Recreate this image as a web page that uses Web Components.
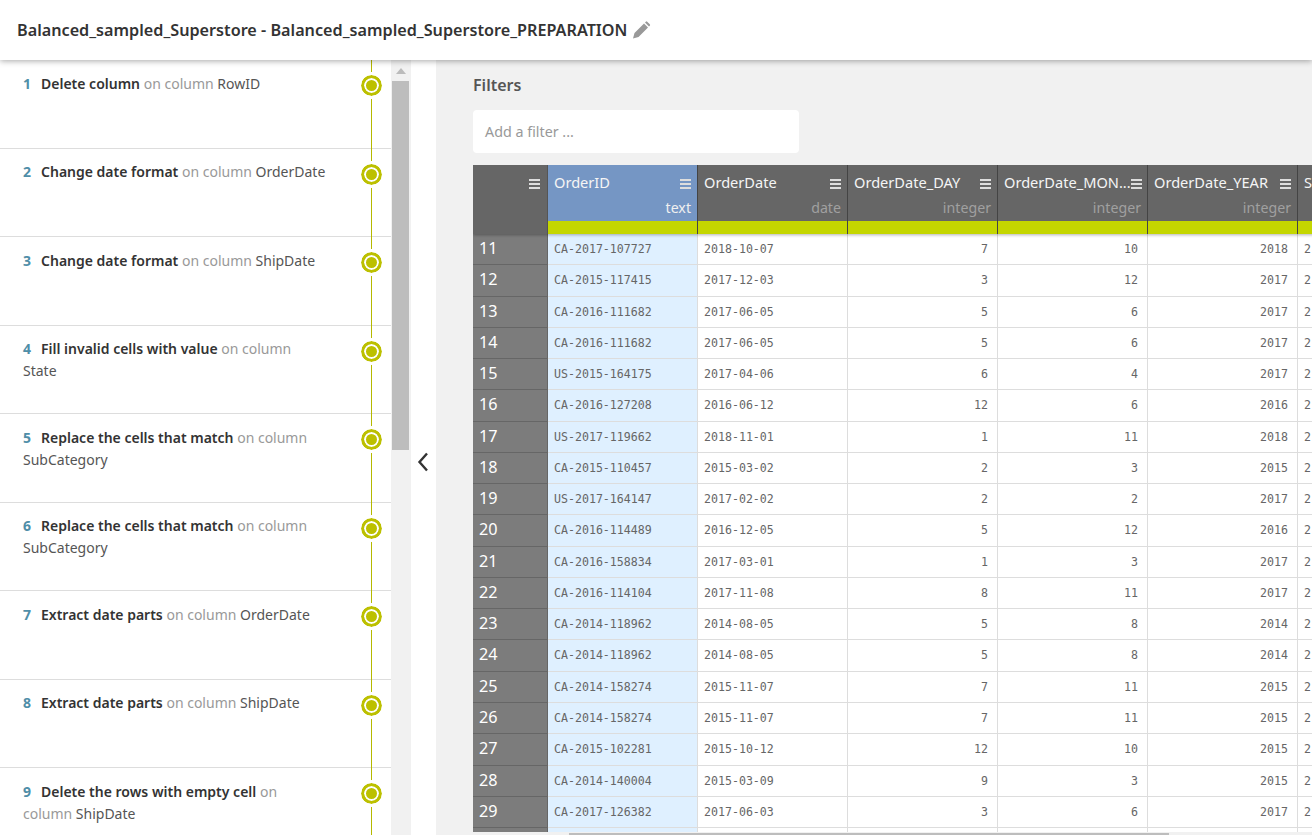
<!DOCTYPE html>
<html>
<head>
<meta charset="utf-8">
<style>
  html, body { margin: 0; height: 835px; overflow: hidden; background: #f1f1f1; }
  body { font-family: "Noto Sans", "Open Sans", sans-serif; color: #333; }
</style>
</head>
<body>
<prep-app></prep-app>
<script>
const SANS = '"Noto Sans", "Open Sans", sans-serif';

class AppHeader extends HTMLElement {
  constructor() {
    super();
    this.attachShadow({ mode: "open" });
    this.shadowRoot.innerHTML = `
    <style>
    :host {
      display: flex;
      align-items: center;
      height: 60px;
      padding-left: 17px;
      background: #fff;
      box-shadow: 0 1px 6px rgba(0, 0, 0, 0.35);
      position: relative;
      z-index: 2;
      font: 600 16.2px ${SANS};
      color: #333;
    }
    svg { margin-left: 6px; }
    </style>
    <slot></slot>
    <svg width="18" height="18" viewBox="0 0 18 18">
      <path fill="#999" d="M0 17.5l1.5-5.5L11 2.500l4 4L5.500 16zM12 1.500l.8-.8a1 1 0 0 1 1.400 0l2.600 2.600a1 1 0 0 1 0 1.400l-.8.8z"/>
    </svg>
    `;
  }
}
customElements.define("app-header", AppHeader);

class StepItem extends HTMLElement {
  constructor() {
    super();
    this.attachShadow({ mode: "open" });
    this.shadowRoot.innerHTML = `
    <style>
    :host {
      display: block;
      box-sizing: border-box;
      height: 88.5px;
      border-bottom: 1px solid #ddd;
      position: relative;
      padding: 12.7px 40px 0 23px;
      font: 400 14px/22px ${SANS};
      color: #999;
    }
    .num { color: #4f8ea8; font-weight: 700; margin-right: 10px; }
    ::slotted(b) { color: #333; font-weight: 600; }
    ::slotted(span) { color: #555; }
    .line { position: absolute; left: 371px; top: 0; bottom: -1px; width: 1px; background: #b5b900; z-index: 1; }
    .dot {
      position: absolute;
      left: 361px;
      top: 15px;
      width: 21px;
      height: 21px;
      box-sizing: border-box;
      border: 3px solid #bcc000;
      border-radius: 50%;
      background: #bcc000;
      box-shadow: inset 0 0 0 2px #fff;
      outline: 3px solid #fff;
      outline-offset: 0;
      z-index: 2;
    }
    </style>
    <div class="line"></div>
    <div class="dot"></div>
    <span class="num"></span><slot></slot>
    `;
  }
  connectedCallback() {
    this.shadowRoot.querySelector(".num").textContent = this.getAttribute("num");
  }
}
customElements.define("step-item", StepItem);

class StepPanel extends HTMLElement {
  constructor() {
    super();
    this.attachShadow({ mode: "open" });
    this.shadowRoot.innerHTML = `
    <style>
    :host { display: flex; width: 436px; background: #fff; flex: none; height: 775px; overflow: hidden; }
    .list { width: 391px; flex: none; height: 775px; overflow: hidden; }
    .track { width: 20px; flex: none; background: #f1f1f1; position: relative; display: flex; flex-direction: column; align-items: center; }
    .arrow { width: 0; height: 0; margin-top: 8px; border: 5px solid transparent; border-top: 0; border-bottom: 6px solid #bbb; }
    .thumb { width: 17px; height: 369px; margin-top: 7px; background: #bdbdbd; margin-left: -2px; }
    .toggle { width: 25px; flex: none; display: flex; flex-direction: column; align-items: center; padding: 392px 2px 0 0; box-sizing: border-box; }
    </style>
    <div class="list"><slot></slot></div>
    <div class="track"><div class="arrow"></div><div class="thumb"></div></div>
    <div class="toggle">
      <svg width="12" height="20" viewBox="0 0 12 20"><path d="M10 1.500L2.500 10l7.500 8.500" fill="none" stroke="#333" stroke-width="2.400"/></svg>
    </div>
    `;
  }
}
customElements.define("step-panel", StepPanel);

class FilterBox extends HTMLElement {
  constructor() {
    super();
    this.attachShadow({ mode: "open" });
    this.shadowRoot.innerHTML = `
    <style>
    :host { display: block; font-family: ${SANS}; }
    h3 { margin: 0; font: 600 16px/22px ${SANS}; color: #555; padding-top: 14px; height: 22px; }
    .input {
      width: 326px;
      height: 43px;
      margin-top: 14px;
      box-sizing: border-box;
      background: #fff;
      border-radius: 4px;
      padding-left: 12px;
      display: flex;
      align-items: center;
      font-size: 14.3px;
      color: #999;
    }
    </style>
    <h3>Filters</h3>
    <div class="input">Add a filter ...</div>
    `;
  }
}
customElements.define("filter-box", FilterBox);

const COLUMNS = [
  { name: "OrderID", type: "text", sel: true },
  { name: "OrderDate", type: "date" },
  { name: "OrderDate_DAY", type: "integer" },
  { name: "OrderDate_MON...", type: "integer" },
  { name: "OrderDate_YEAR", type: "integer" },
  { name: "ShipDate", type: "date" }
];

const ROWS = [
  [11, "CA-2017-107727", "2018-10-07", 7, 10, 2018, 2],
  [12, "CA-2015-117415", "2017-12-03", 3, 12, 2017, 2],
  [13, "CA-2016-111682", "2017-06-05", 5, 6, 2017, 2],
  [14, "CA-2016-111682", "2017-06-05", 5, 6, 2017, 2],
  [15, "US-2015-164175", "2017-04-06", 6, 4, 2017, 2],
  [16, "CA-2016-127208", "2016-06-12", 12, 6, 2016, 2],
  [17, "US-2017-119662", "2018-11-01", 1, 11, 2018, 2],
  [18, "CA-2015-110457", "2015-03-02", 2, 3, 2015, 2],
  [19, "US-2017-164147", "2017-02-02", 2, 2, 2017, 2],
  [20, "CA-2016-114489", "2016-12-05", 5, 12, 2016, 2],
  [21, "CA-2016-158834", "2017-03-01", 1, 3, 2017, 2],
  [22, "CA-2016-114104", "2017-11-08", 8, 11, 2017, 2],
  [23, "CA-2014-118962", "2014-08-05", 5, 8, 2014, 2],
  [24, "CA-2014-118962", "2014-08-05", 5, 8, 2014, 2],
  [25, "CA-2014-158274", "2015-11-07", 7, 11, 2015, 2],
  [26, "CA-2014-158274", "2015-11-07", 7, 11, 2015, 2],
  [27, "CA-2015-102281", "2015-10-12", 12, 10, 2015, 2],
  [28, "CA-2014-140004", "2015-03-09", 9, 3, 2015, 2],
  [29, "CA-2017-126382", "2017-06-03", 3, 6, 2017, 2],
  // only the top of this row is in view, its text is below the fold
  ["", "", "", "", "", "", ""]
];

const BURGER = `<svg class="burger" width="11" height="10" viewBox="0 0 11 10"><path d="M0 0h11v2H0zM0 4h11v2H0zM0 8h11v2H0z" fill="currentColor"/></svg>`;

class DataTable extends HTMLElement {
  constructor() {
    super();
    this.attachShadow({ mode: "open" });
    const head = COLUMNS.map(c => `
      <div class="col-head ${c.sel ? "sel" : ""}">
        <div class="name"><span>${c.name}</span>${BURGER}</div>
        <div class="type">${c.type}</div>
        <div class="quality"></div>
      </div>`).join("");
    const rows = ROWS.map(r => `
      <div class="row">
        <div class="idx">${r[0]}</div>
        <div class="cell sel">${r[1]}</div>
        <div class="cell">${r[2]}</div>
        <div class="cell num">${r[3]}</div>
        <div class="cell num">${r[4]}</div>
        <div class="cell num">${r[5]}</div>
        <div class="cell">${r[6]}</div>
      </div>`).join("");
    this.shadowRoot.innerHTML = `
    <style>
    :host { display: block; width: 839px; height: 667px; overflow: hidden; margin-top: 12px; position: relative; }
    .head, .row { display: grid; grid-template-columns: 75px repeat(5, 150px) 150px; width: 975px; }
    .head { height: 69px; box-shadow: 0 1px 3px rgba(0,0,0,.3); position: relative; z-index: 1; font: 400 14.6px ${SANS}; }
    .corner { background: #666; color: #ddd; display: flex; justify-content: flex-end; padding: 14px 7px 0 0; box-sizing: border-box; border-right: 1px solid #555; }
    .corner svg { margin-top: 0; }
    .col-head { background: #666; color: #f5f5f5; border-right: 1px solid #444; box-sizing: border-box; display: flex; flex-direction: column; min-width: 0; }
    .col-head.sel { background: #7596c4; }
    .name { height: 36px; padding: 7px 6px 0 6px; display: flex; justify-content: space-between; box-sizing: border-box; line-height: 20px; }
    .name span { white-space: nowrap; }
    .name svg { flex: none; margin-top: 7px; margin-left: 0; color: #ddd; }
    .type { height: 20px; text-align: right; padding-right: 6px; color: #a0a0a0; line-height: 14px; font-size: 14.2px; }
    .sel .type { color: #f0f0f0; }
    .quality { height: 13px; background: #c4d600; }
    .row { height: 31.28px; }
    .idx { background: #7c7c7c; color: #fff; border-bottom: 1px solid #666; border-right: 1px solid #666; box-sizing: border-box; padding-left: 6px; font: 400 16.2px/29px ${SANS}; }
    .cell { background: #fff; color: #666; border-bottom: 1px solid #ddd; border-right: 1px solid #ddd; box-sizing: border-box; padding: 0 6px; font: 400 11.6px/30px "DejaVu Sans Mono", monospace; }
    .cell.sel { background: #dff0ff; }
    .cell.num { text-align: right; padding-right: 9px; }
    </style>
    <div class="head"><div class="corner">${BURGER}</div>${head}</div>
    ${rows}
    `;
  }
}
customElements.define("data-table", DataTable);

class MainArea extends HTMLElement {
  constructor() {
    super();
    this.attachShadow({ mode: "open" });
    this.shadowRoot.innerHTML = `
    <style>
    :host { display: block; flex: 1; min-width: 0; background: #f1f1f1; padding-left: 37px; height: 775px; overflow: hidden; box-sizing: border-box; position: relative; }
    .hbar { position: absolute; left: 133px; bottom: 0; width: 600px; height: 2px; background: #bdbdbd; }
    </style>
    <slot></slot>
    <div class="hbar"></div>
    `;
  }
}
customElements.define("main-area", MainArea);

class PrepApp extends HTMLElement {
  constructor() {
    super();
    this.attachShadow({ mode: "open" });
    this.shadowRoot.innerHTML = `
    <style>
    :host { display: block; width: 1312px; height: 835px; overflow: hidden; }
    .body { display: flex; }
    </style>
    <app-header>Balanced_sampled_Superstore - Balanced_sampled_Superstore_PREPARATION</app-header>
    <div class="body">
      <step-panel>
        <step-item num="1"><b>Delete column</b> on column <span>RowID</span></step-item>
        <step-item num="2"><b>Change date format</b> on column <span>OrderDate</span></step-item>
        <step-item num="3"><b>Change date format</b> on column <span>ShipDate</span></step-item>
        <step-item num="4"><b>Fill invalid cells with value</b> on column<br><span>State</span></step-item>
        <step-item num="5"><b>Replace the cells that match</b> on column<br><span>SubCategory</span></step-item>
        <step-item num="6"><b>Replace the cells that match</b> on column<br><span>SubCategory</span></step-item>
        <step-item num="7"><b>Extract date parts</b> on column <span>OrderDate</span></step-item>
        <step-item num="8"><b>Extract date parts</b> on column <span>ShipDate</span></step-item>
        <step-item num="9"><b>Delete the rows with empty cell</b> on<br>column <span>ShipDate</span></step-item>
      </step-panel>
      <main-area>
        <filter-box></filter-box>
        <data-table></data-table>
      </main-area>
    </div>
    `;
  }
}
customElements.define("prep-app", PrepApp);
</script>
</body>
</html>
